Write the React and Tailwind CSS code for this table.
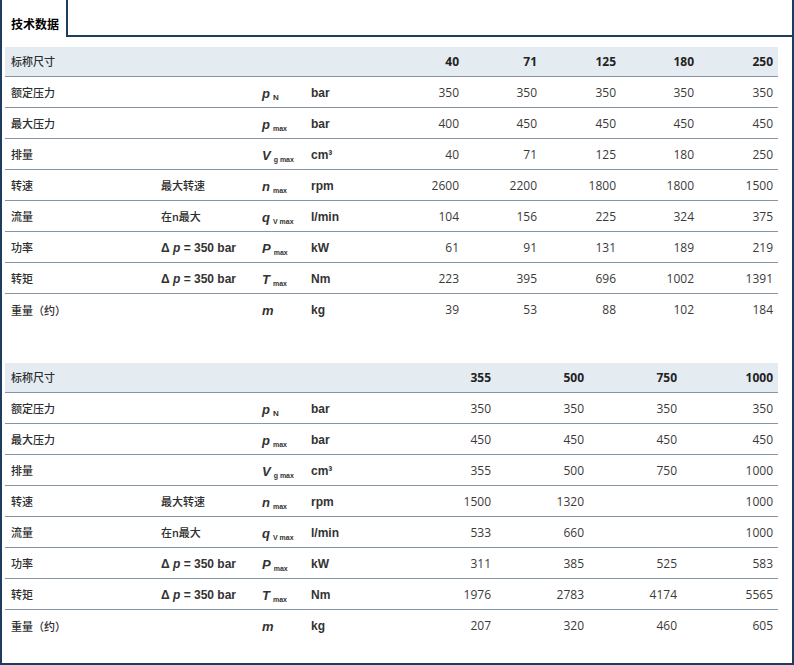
import React from "react";

const T1_COLS = "grid-cols-[150px_101px_49px_81px_78px_78px_79px_78px_79px]";
const T2_COLS = "grid-cols-[150px_101px_49px_98px_93px_93px_93px_96px]";

const table1 = {
  cols: T1_COLS,
  sizes: ["40", "71", "125", "180", "250"],
  rows: [
    ["额定压力", "", "p", "N", "bar", ["350", "350", "350", "350", "350"]],
    ["最大压力", "", "p", "max", "bar", ["400", "450", "450", "450", "450"]],
    ["排量", "", "V", "g max", "cm³", ["40", "71", "125", "180", "250"]],
    ["转速", "最大转速", "n", "max", "rpm", ["2600", "2200", "1800", "1800", "1500"]],
    ["流量", "在n最大", "q", "V max", "l/min", ["104", "156", "225", "324", "375"]],
    ["功率", "dp", "P", "max", "kW", ["61", "91", "131", "189", "219"]],
    ["转矩", "dp", "T", "max", "Nm", ["223", "395", "696", "1002", "1391"]],
    ["重量（约）", "", "m", "", "kg", ["39", "53", "88", "102", "184"]],
  ],
};

const table2 = {
  cols: T2_COLS,
  sizes: ["355", "500", "750", "1000"],
  rows: [
    ["额定压力", "", "p", "N", "bar", ["350", "350", "350", "350"]],
    ["最大压力", "", "p", "max", "bar", ["450", "450", "450", "450"]],
    ["排量", "", "V", "g max", "cm³", ["355", "500", "750", "1000"]],
    ["转速", "最大转速", "n", "max", "rpm", ["1500", "1320", "", "1000"]],
    ["流量", "在n最大", "q", "V max", "l/min", ["533", "660", "", "1000"]],
    ["功率", "dp", "P", "max", "kW", ["311", "385", "525", "583"]],
    ["转矩", "dp", "T", "max", "Nm", ["1976", "2783", "4174", "5565"]],
    ["重量（约）", "", "m", "", "kg", ["207", "320", "460", "605"]],
  ],
};

const cell = "flex items-center h-full leading-none";
const cjk = "font-['Noto_Sans_CJK_SC',sans-serif] text-[11px] font-medium text-[#2e2e2e]";
const bold = "font-['Liberation_Sans',sans-serif] font-bold text-[12px] text-[#333]";
const num = "font-['Open_Sans',sans-serif] text-[12px] text-[#3a3a3a] justify-end pr-[5px]";

const Symbol = ({ m, s }) => (
  <span className="font-['Liberation_Sans',sans-serif] font-bold text-[#333] whitespace-nowrap">
    <span className="italic text-[13px]">{m}</span>
    {s && (
      <span className={`ml-[3px] relative top-[2px] ${s === "N" ? "text-[8px]" : "text-[7px]"}`}>
        {s}
      </span>
    )}
  </span>
);

const Delta = () => (
  <span className={`${bold} whitespace-nowrap`}>
    Δ <span className="italic">p</span> = 350 bar
  </span>
);

const SpecTable = ({ data }) => (
  <div>
    <div className={`grid ${data.cols} h-[30px] bg-[#e4ecf2] border-b border-[#8695aa]`}>
      <div className={`${cell} ${cjk} pl-[6px]`}>标称尺寸</div>
      <div />
      <div />
      <div />
      {data.sizes.map((s) => (
        <div key={s} className={`${cell} ${num} font-bold text-[#222]`}>
          {s}
        </div>
      ))}
    </div>
    {data.rows.map((r, i) => (
      <div
        key={i}
        className={`grid ${data.cols} h-[31px] ${i < data.rows.length - 1 ? "border-b border-[#8695aa]" : ""}`}
      >
        <div className={`${cell} ${cjk} pl-[6px] pt-[1px]`}>{r[0]}</div>
        <div className={`${cell} pl-[6px] pt-[1px]`}>
          {r[1] === "dp" ? <Delta /> : <span className={cjk}>{r[1]}</span>}
        </div>
        <div className={`${cell} pl-[6px] pt-[1px]`}>
          <Symbol m={r[2]} s={r[3]} />
        </div>
        <div className={`${cell} ${bold} pl-[6px] pt-[1px]`}>{r[4]}</div>
        {r[5].map((v, j) => (
          <div key={j} className={`${cell} ${num} pt-[1px]`}>
            {v}
          </div>
        ))}
      </div>
    ))}
  </div>
);

export default function App() {
  return (
    <div className="w-[794px] h-[665px] flex flex-col bg-white">
      <div className="flex h-[37px]">
        <div className="w-[68px] border-l-2 border-r-2 border-[#1d3c5e] pl-[9px] pt-[11px]">
          <span className="font-['Noto_Sans_CJK_SC',sans-serif] text-[12px] font-bold text-black">
            技术数据
          </span>
        </div>
        <div className="flex-1 border-b-2 border-r-2 border-[#1d3c5e]" />
      </div>
      <div className="flex-1 border-l-2 border-r-2 border-b-2 border-[#1d3c5e] pt-[10px] pl-[3px] pr-[14px]">
        <div className="flex flex-col gap-[38px]">
          <SpecTable data={table1} />
          <SpecTable data={table2} />
        </div>
      </div>
    </div>
  );
}
